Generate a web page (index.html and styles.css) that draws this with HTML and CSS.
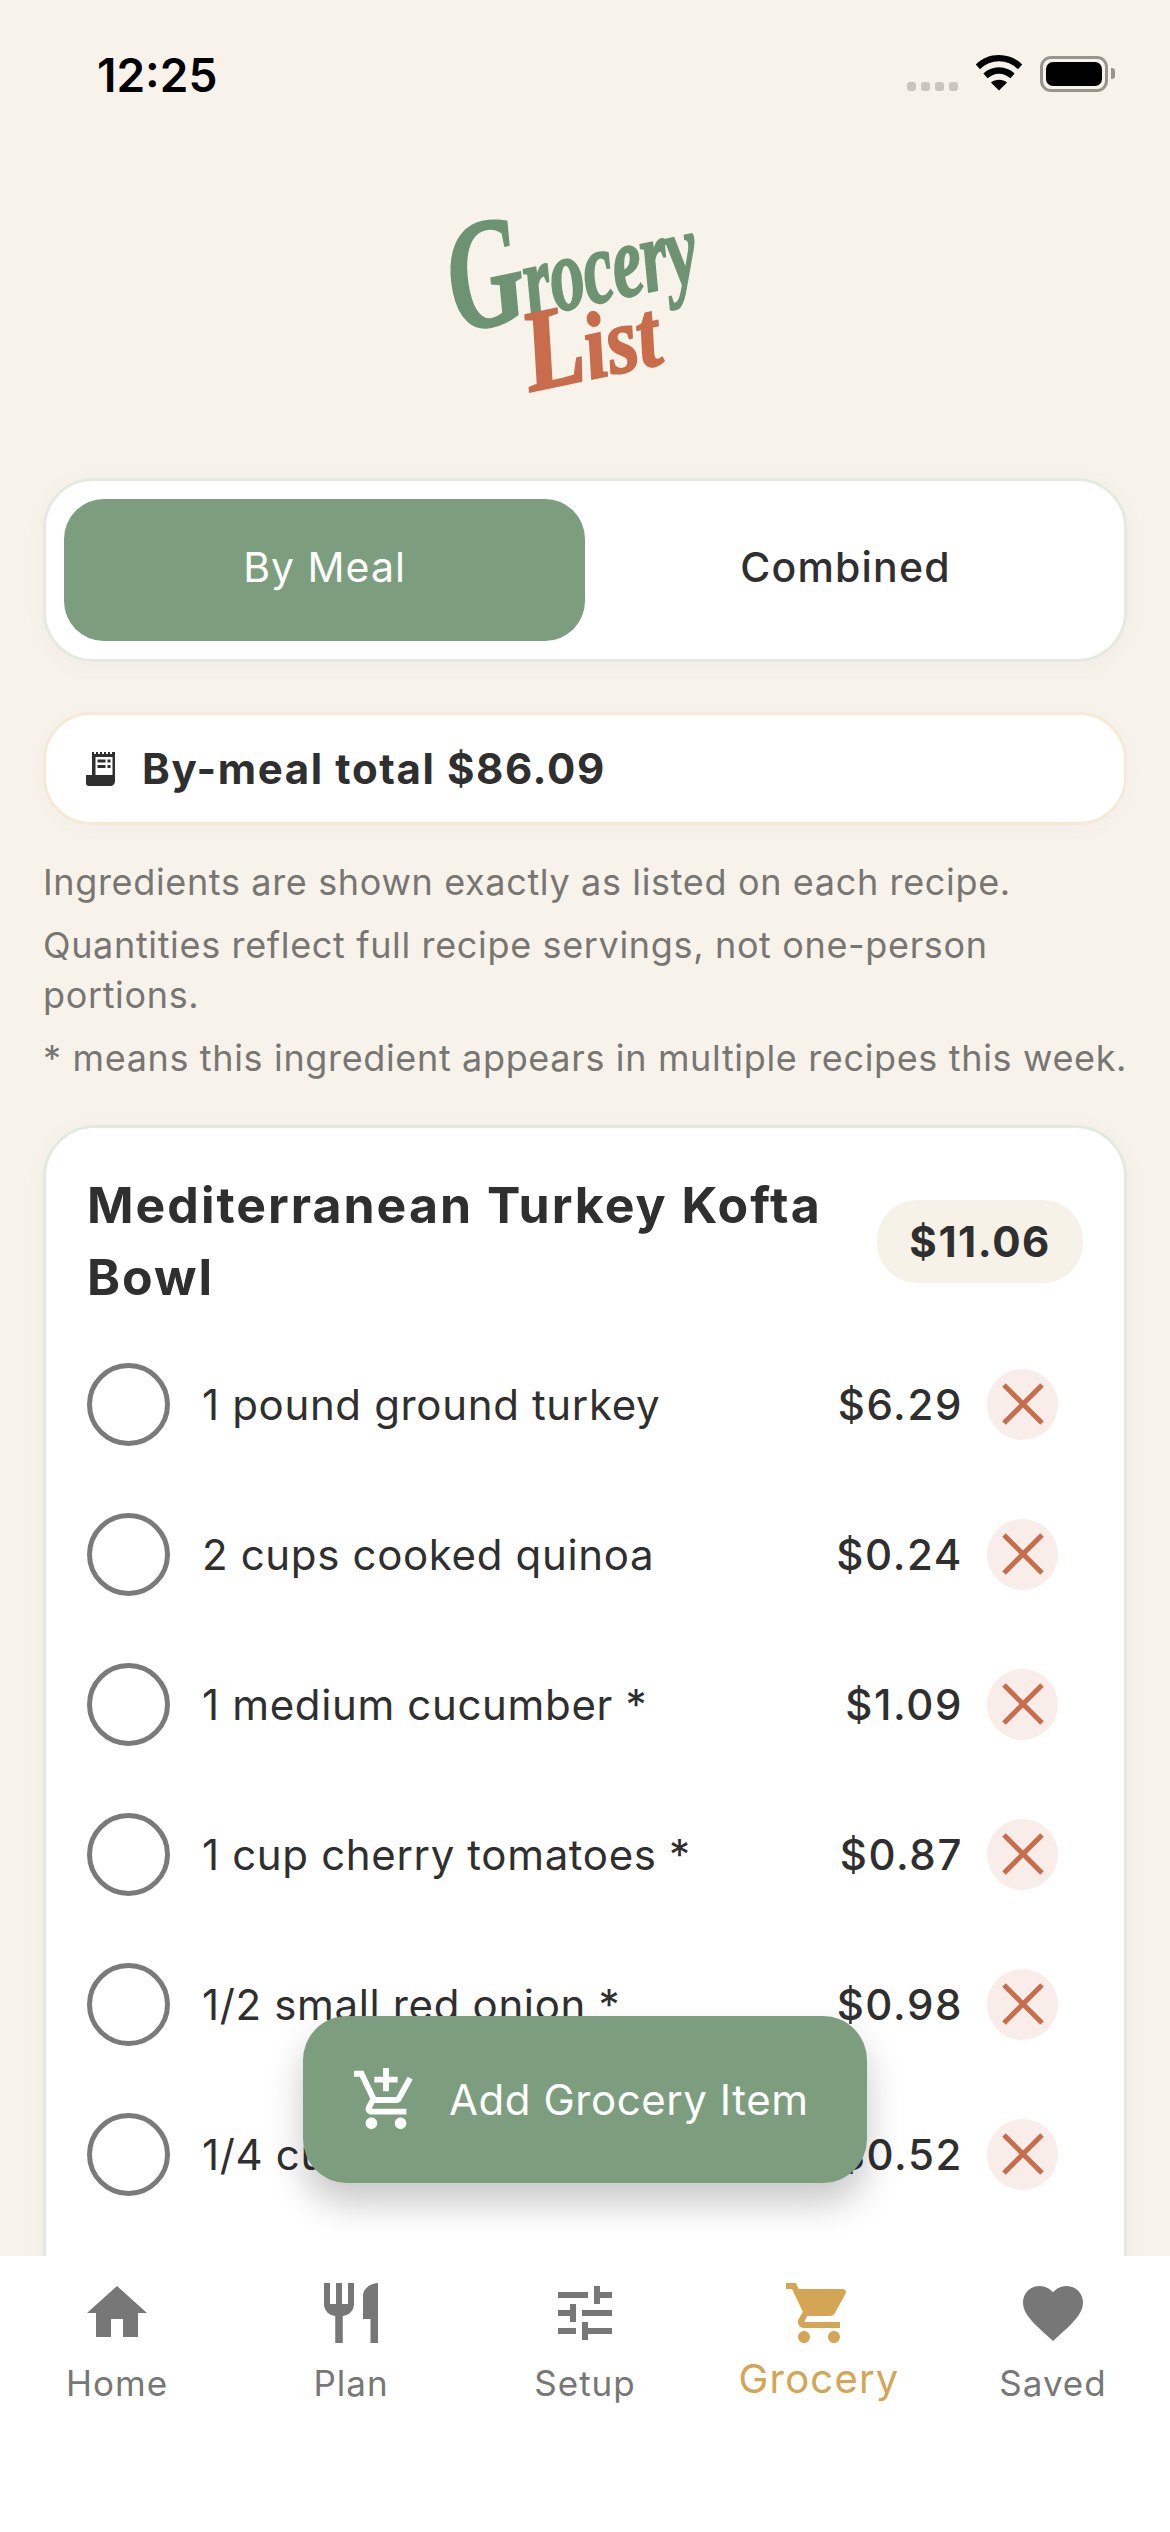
FILE: index.html
```html
<!DOCTYPE html>
<html lang="en">
<head>
<meta charset="utf-8">
<title>Grocery List</title>
<link rel="stylesheet" href="styles.css">
</head>
<body>
<div class="phone">
  <header class="status">
    <span class="time">12:25</span>
    <div class="status-icons">
      <span class="dots"><i></i><i></i><i></i><i></i></span>
      <svg class="wifi" width="48" height="36" viewBox="0 0 50 38"><path d="M25 0C15.500 0 7 3.500 0.500 10L5 15C10.500 9.500 17.500 6.500 25 6.500S39.500 9.500 45 15L49.500 10C43 3.500 34.500 0 25 0Z"/><path d="M25 13C18.500 13 13 15.500 8.500 19.500L13 24.500C16.500 21.500 20.500 19.700 25 19.700S33.500 21.500 37 24.500L41.500 19.500C37 15.500 31.500 13 25 13Z"/><path d="M25 26C21.800 26 19 27 16.500 29L25 37.500L33.500 29C31 27 28.200 26 25 26Z"/></svg>
      <span class="battery"><i></i></span>
    </div>
  </header>

  <div class="logo" aria-label="Grocery List">
    <span class="logo-top">Grocery</span>
    <span class="logo-bottom">List</span>
  </div>

  <div class="segment">
    <div class="seg seg-on">By Meal</div>
    <div class="seg">Combined</div>
  </div>

  <div class="total">
    <svg class="receipt" width="33" height="34" viewBox="0 0 33 34"><path fill-rule="evenodd" d="M6 0h2v2h2V0h2v2h2V0h2v2h2V0h2v2h2V0h2v2h2V0h3v29c0 3-2 5-5 5H3c-2 0-3-1-3-3v-8h6ZM9.500 5v18h17V5Z"/><path d="M11.500 7.500h8v3h-8zM21.500 7.500h3v3h-3zM11.500 13h8v3h-8zM21.500 13h3v3h-3z"/></svg>
    <span>By-meal total $86.09</span>
  </div>

  <div class="notes">
    <p>Ingredients are shown exactly as listed on each recipe.</p>
    <p>Quantities reflect full recipe servings, not one-person portions.</p>
    <p>* means this ingredient appears in multiple recipes this week.</p>
  </div>

  <section class="card">
    <div class="card-head">
      <h2>Mediterranean Turkey Kofta Bowl</h2>
      <span class="pill">$11.06</span>
    </div>
    <ul class="items">
      <li class="item"><span class="check"></span><span class="name">1 pound ground turkey</span><span class="price">$6.29</span><span class="del"><svg viewBox="0 0 42 42"><path d="M2 2L40 40M40 2L2 40"/></svg></span></li>
      <li class="item"><span class="check"></span><span class="name">2 cups cooked quinoa</span><span class="price">$0.24</span><span class="del"><svg viewBox="0 0 42 42"><path d="M2 2L40 40M40 2L2 40"/></svg></span></li>
      <li class="item"><span class="check"></span><span class="name">1 medium cucumber *</span><span class="price">$1.09</span><span class="del"><svg viewBox="0 0 42 42"><path d="M2 2L40 40M40 2L2 40"/></svg></span></li>
      <li class="item"><span class="check"></span><span class="name">1 cup cherry tomatoes *</span><span class="price">$0.87</span><span class="del"><svg viewBox="0 0 42 42"><path d="M2 2L40 40M40 2L2 40"/></svg></span></li>
      <li class="item"><span class="check"></span><span class="name">1/2 small red onion *</span><span class="price">$0.98</span><span class="del"><svg viewBox="0 0 42 42"><path d="M2 2L40 40M40 2L2 40"/></svg></span></li>
      <li class="item"><span class="check"></span><span class="name">1/4 cup fresh parsley</span><span class="price">$0.52</span><span class="del"><svg viewBox="0 0 42 42"><path d="M2 2L40 40M40 2L2 40"/></svg></span></li>
    </ul>
  </section>

  <button class="fab">
    <svg width="70" height="70" viewBox="0 0 24 24"><path d="M11 9h2V6h3V4h-3V1h-2v3H8v2h3v3zm-4 9c-1.100 0-1.990.9-1.990 2S5.900 22 7 22s2-.9 2-2-.9-2-2-2zm10 0c-1.100 0-1.990.9-1.990 2s.89 2 1.990 2 2-.9 2-2-.9-2-2-2zm-9.830-3.250l.03-.12.900-1.630h7.450c.75 0 1.410-.41 1.750-1.030l3.860-7.010L19.420 4h-.01l-1.100 2-2.760 5H8.530l-.13-.27L6.160 6l-.95-2-.94-2H1v2h2l3.600 7.590-1.350 2.450c-.16.280-.25.610-.25.960 0 1.100.9 2 2 2h12v-2H7.420c-.13 0-.25-.11-.25-.25z"/></svg>
    <span>Add Grocery Item</span>
  </button>

  <nav class="tabs">
    <div class="tab">
      <svg width="72" height="72" viewBox="0 0 24 24"><path d="M10 20v-6h4v6h5v-8h3L12 3 2 12h3v8z"/></svg>
      <span>Home</span>
    </div>
    <div class="tab">
      <svg width="72" height="72" viewBox="0 0 24 24"><path d="M11 9H9V2H7v7H5V2H3v7c0 2.120 1.660 3.840 3.750 3.970V22h2.500v-9.030C11.340 12.840 13 11.120 13 9V2h-2v7zm5-3v8h2.500v8H21V2c-2.760 0-5 2.240-5 4z"/></svg>
      <span>Plan</span>
    </div>
    <div class="tab">
      <svg width="72" height="72" viewBox="0 0 24 24"><path d="M3 17v2h6v-2H3zM3 5v2h10V5H3zm10 16v-2h8v-2h-8v-2h-2v6h2zM7 9v2H3v2h4v2h2V9H7zm14 4v-2H11v2h10zm-6-4h2V7h4V5h-4V3h-2v6z"/></svg>
      <span>Setup</span>
    </div>
    <div class="tab tab-on">
      <svg width="72" height="72" viewBox="0 0 24 24"><path d="M7 18c-1.100 0-1.990.9-1.990 2S5.900 22 7 22s2-.9 2-2-.9-2-2-2zM1 2v2h2l3.600 7.590-1.350 2.450c-.16.280-.25.610-.25.960 0 1.100.9 2 2 2h12v-2H7.420c-.14 0-.25-.110-.25-.25l.03-.12.900-1.630h7.450c.75 0 1.410-.41 1.750-1.030l3.580-6.490c.08-.14.120-.31.120-.48 0-.55-.45-1-1-1H5.210l-.94-2H1zm16 16c-1.100 0-1.990.9-1.990 2s.89 2 1.990 2 2-.9 2-2-.9-2-2-2z"/></svg>
      <span>Grocery</span>
    </div>
    <div class="tab">
      <svg width="72" height="72" viewBox="0 0 24 24"><path d="M12 21.350l-1.450-1.320C5.400 15.360 2 12.280 2 8.500 2 5.420 4.420 3 7.500 3c1.740 0 3.410.81 4.500 2.090C13.090 3.810 14.760 3 16.500 3 19.580 3 22 5.420 22 8.500c0 3.780-3.400 6.860-8.550 11.540L12 21.350z"/></svg>
      <span>Saved</span>
    </div>
  </nav>
</div>
</body>
</html>
```
FILE: styles.css
```css
* { box-sizing: border-box; }
html, body { margin: 0; padding: 0; }
body { font-family: Inter, "Liberation Sans", sans-serif; color: #2f2f2f; background: #f7f3eb; }
.phone { position: relative; width: 1170px; height: 2532px; overflow: hidden; background: #f7f3eb; padding: 0 43px; }

.status { display: flex; justify-content: space-between; align-items: flex-end; height: 92px; margin: 0 -43px; padding: 0 55px 0 97px; }
.time { font-size: 46px; font-weight: 600; line-height: 1; color: #000; margin-bottom: -6px; }
.status-icons { display: flex; align-items: flex-end; gap: 17px; }
.dots { display: flex; gap: 5px; padding-bottom: 1px; }
.dots i { width: 9px; height: 9px; border-radius: 3px; background: #c9c6bf; }
.wifi { display: block; fill: #000; margin-bottom: 1px; }
.battery { position: relative; width: 68px; height: 36px; margin-right: 7px; border: 3px solid #98958d; border-radius: 11px; padding: 3px; display: block; }
.battery i { display: block; width: 100%; height: 100%; background: #000; border-radius: 7px; }
.battery::after { content: ""; position: absolute; right: -10px; top: 9px; width: 4px; height: 11px; background: #98958d; border-radius: 0 3px 3px 0; }

.logo { display: flex; flex-direction: column; align-items: center; height: 386px; padding-top: 100px; transform: translateX(-9px) rotate(-12deg); font-family: "Liberation Serif", serif; font-style: italic; font-weight: 700; line-height: 1; }
.logo-top { font-size: 104px; line-height: 126px; color: #6d9373; letter-spacing: -1px; -webkit-text-stroke: 2px #6d9373; transform: scaleX(0.66); }
.logo-top::first-letter { font-size: 156px; }
.logo-bottom { font-size: 94px; line-height: 100px; color: #c86c4c; margin-top: -44px; -webkit-text-stroke: 2px #c86c4c; transform: translateX(2px) scaleX(0.86); }
.logo-bottom::first-letter { font-size: 116px; }

.segment { display: flex; height: 184px; padding: 18px; background: #fff; border: 3px solid #e5eae1; border-radius: 50px; box-shadow: 0 4px 24px rgba(0,0,0,0.03); }
.seg { flex: 1; display: flex; align-items: center; justify-content: center; padding-bottom: 6px; font-size: 41px; font-weight: 450; letter-spacing: 1.200px; border-radius: 40px; color: #2f2f2f; }
.seg-on { background: #7c9e7e; color: #fff; font-weight: 400; letter-spacing: 1px; }

.total { display: flex; align-items: center; gap: 23px; height: 113px; margin-top: 50px; padding: 0 40px; background: #fff; border: 3px solid #f6ead7; border-radius: 48px; font-size: 42px; font-weight: 700; letter-spacing: 1.600px; box-shadow: 0 4px 24px rgba(0,0,0,0.02); }
.receipt { display: block; fill: #2f2f2f; flex: none; }

.notes { margin-top: 32px; margin-right: -8px; font-size: 36px; line-height: 50px; color: #787672; letter-spacing: 0.650px; }
.notes p { margin: 0 0 13px; }

.card { margin-top: 42px; height: 1240px; padding: 41px 41px 0; background: #fff; border: 3px solid #e2eadf; border-radius: 52px 52px 0 0; box-shadow: 0 4px 24px rgba(0,0,0,0.03); }
.card-head { display: flex; justify-content: space-between; align-items: center; gap: 36px; padding-bottom: 16px; }
.card-head h2 { margin: 0; font-size: 50px; font-weight: 700; line-height: 72px; letter-spacing: 2px; color: #2f2f2f; flex: 1; }
.pill { padding: 0 32px; height: 83px; display: flex; align-items: center; flex: none; border-radius: 40px; background: #f7f2e8; font-size: 42px; font-weight: 700; letter-spacing: 1.600px; }

.items { list-style: none; margin: 0; padding: 0; }
.item { display: flex; align-items: center; height: 150px; padding-right: 25px; }
.check { width: 83px; height: 83px; border-radius: 50%; border: 5px solid #7a7a7a; flex: none; }
.name { flex: 1; margin-left: 32px; font-size: 42px; letter-spacing: 0.650px; color: #2f2f2f; }
.price { font-size: 42px; font-weight: 500; letter-spacing: 1.600px; margin-right: 24px; }
.del { width: 71px; height: 71px; border-radius: 50%; background: #f8ede8; display: flex; align-items: center; justify-content: center; flex: none; }
.del svg { width: 42px; height: 42px; fill: none; stroke: #c86c4c; stroke-width: 5; display: block; }

.fab { position: absolute; left: 303px; top: 2016px; width: 564px; height: 167px; display: flex; align-items: center; gap: 28px; padding: 0 42px 0 48px; border: 0; border-radius: 44px; background: #7c9e7e; color: #fff; font: 400 42px Inter, sans-serif; letter-spacing: 0.550px; box-shadow: 0 20px 36px rgba(0,0,0,0.22); }
.fab svg { fill: #fff; display: block; flex: none; }

.tabs { position: absolute; left: 0; right: 0; top: 2256px; height: 276px; background: #fff; display: flex; padding-top: 21px; }
.tab { flex: 1; display: flex; flex-direction: column; align-items: center; color: #777; font-size: 35px; letter-spacing: 1px; line-height: 44px; gap: 12px; }
.tab svg { display: block; fill: #777; }
.tab-on { color: #d4a554; font-size: 40px; letter-spacing: 1.200px; gap: 8px; }
.tab-on svg { fill: #d4a554; }
```
